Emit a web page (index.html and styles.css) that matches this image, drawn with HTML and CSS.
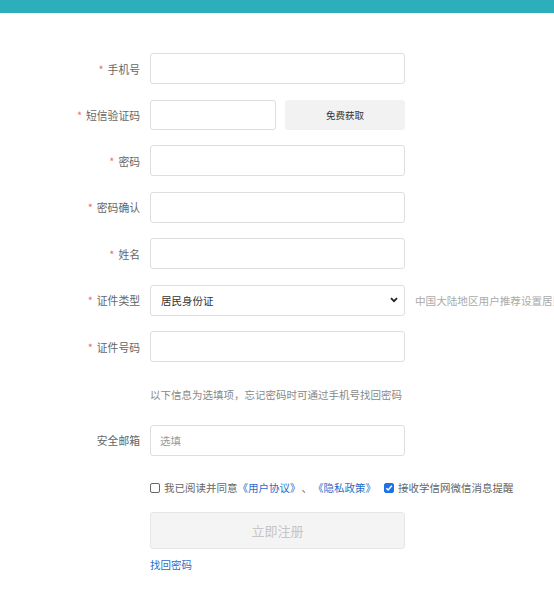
FILE: index.html
```html
<!DOCTYPE html>
<html lang="zh">
<head>
<meta charset="utf-8">
<link rel="stylesheet" href="styles.css">
</head>
<body>
<div class="topbar"></div>
<form class="form">
  <div class="row"><label class="label"><span class="req">*</span>手机号</label><input class="field" type="text"></div>
  <div class="row"><label class="label"><span class="req">*</span>短信验证码</label><div class="sms"><input class="field sms-input" type="text"><button type="button" class="sms-btn">免费获取</button></div></div>
  <div class="row"><label class="label"><span class="req">*</span>密码</label><input class="field" type="password"></div>
  <div class="row"><label class="label"><span class="req">*</span>密码确认</label><input class="field" type="password"></div>
  <div class="row"><label class="label"><span class="req">*</span>姓名</label><input class="field" type="text"></div>
  <div class="row"><label class="label"><span class="req">*</span>证件类型</label>
    <div class="select">
      <span class="select-text">居民身份证</span>
      <svg class="chev" width="8" height="6" viewBox="0 0 8 6"><path d="M1 1.2 L4 4.2 L7 1.2" fill="none" stroke="#222" stroke-width="1.8"/></svg>
    </div>
    <span class="aside">中国大陆地区用户推荐设置居民身份证</span>
  </div>
  <div class="row"><label class="label"><span class="req">*</span>证件号码</label><input class="field" type="text"></div>
  <div class="note">以下信息为选填项，忘记密码时可通过手机号找回密码</div>
  <div class="row"><label class="label">安全邮箱</label><input class="field" type="text" placeholder="选填"></div>
  <div class="checks">
    <span class="check"><span class="box"></span>我已阅读并同意<a class="link">《用户协议》</a><span class="sep">、</span><a class="link">《隐私政策》</a></span>
    <span class="check"><span class="box on"><svg width="8" height="8" viewBox="0 0 8 8"><path d="M1.3 4.2 L3.2 6 L6.8 1.8" fill="none" stroke="#fff" stroke-width="1.5"/></svg></span>接收学信网微信消息提醒</span>
  </div>
  <button type="button" class="submit">立即注册</button>
  <a class="find">找回密码</a>
</form>
</body>
</html>
```
FILE: styles.css
```css
* { box-sizing: border-box; }
html, body { margin: 0; padding: 0; background: #fff; overflow: hidden; }
body { font-family: "Noto Sans CJK SC", "Noto Sans", sans-serif; color: #555; font-size: 10.5px; width: 554px; }
.topbar { height: 13px; background: #2cafbb; }
.form { padding-top: 40px; display: flex; flex-direction: column; }
.row { display: flex; align-items: center; margin-bottom: 15.5px; white-space: nowrap; }
.label { width: 140px; text-align: right; color: #666; font-size: 10.8px; margin-right: 10px; flex: none; }
.req { color: #e87070; margin-right: 4px; }
.field { width: 255px; height: 31px; border: 1px solid #dedede; border-radius: 3px; padding: 0 9px; font: inherit; font-size: 10.5px; color: #333; outline: none; flex: none; }
.field::placeholder { color: #999; }
.sms { display: flex; width: 255px; justify-content: space-between; height: 30px; }
.sms-input { width: 126px; height: 30px; }
.sms-btn { width: 120px; height: 30px; border: none; border-radius: 3px; background: #f2f2f2; color: #333; font: inherit; font-size: 9.5px; padding: 0; }
.select { width: 255px; height: 31px; border: 1px solid #dedede; border-radius: 3px; padding: 0 6px 0 10px; display: flex; align-items: center; justify-content: space-between; flex: none; }
.select-text { color: #333; font-size: 10.5px; }
.chev { display: block; }
.aside { margin-left: 10px; color: #aaa; font-size: 10.6px; }
.note { margin-left: 150px; color: #888; font-size: 10.5px; margin-top: 10px; margin-bottom: 23px; line-height: 14px; }
.checks { margin-left: 150px; display: flex; align-items: center; gap: 8px; color: #666; font-size: 10.5px; margin-top: 10px; line-height: 14px; }
.check { display: flex; align-items: center; }
.sep { margin: 0 1px; }
.box { width: 10px; height: 10px; border: 1px solid #666; border-radius: 2px; margin-right: 4px; display: flex; align-items: center; justify-content: center; }
.box.on { background: #1a73e8; border-color: #1a73e8; }
.link { color: #2a6cc8; }
.submit { margin: 17px 0 0 150px; width: 255px; height: 37px; border: 1px solid #e6e6e6; border-radius: 3px; background: #f4f4f4; color: #c5c5c5; font: inherit; font-size: 13px; }
.find { margin: 9px 0 0 150px; color: #2a6cc8; font-size: 10.5px; line-height: 14px; }
```
